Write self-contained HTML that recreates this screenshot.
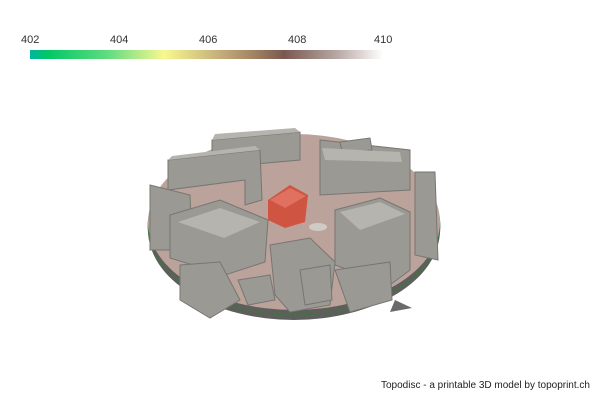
<!DOCTYPE html>
<html><head><meta charset="utf-8"><style>
body{margin:0;width:600px;height:400px;background:#fff;overflow:hidden;position:relative;font-family:"Liberation Sans",sans-serif}
.l{position:absolute;top:34px;font-size:11px;color:#333}
.bar{position:absolute;left:30px;top:50px;width:353px;height:9px;background:linear-gradient(90deg,#00b4a0 0%,#00c864 5%,#60dc80 22%,#f8f890 38%,#c0a878 55%,#a08060 64%,#7a5850 72%,#b8a8a4 87%,#fff 100%)}
.c{position:absolute;right:10px;top:380px;font-size:10px;color:#222}
</style></head><body>
<div class="l" style="left:21px">402</div>
<div class="l" style="left:110px">404</div>
<div class="l" style="left:199px">406</div>
<div class="l" style="left:288px">408</div>
<div class="l" style="left:374px">410</div>
<div class="bar"></div>
<svg width="600" height="400" style="position:absolute;left:0;top:0">
<ellipse cx="294" cy="230" rx="146" ry="90" fill="#5e5e5c"/>
<ellipse cx="294" cy="226" rx="146" ry="89" fill="none" stroke="#3a7a3a" stroke-width="0.8"/>
<ellipse cx="294" cy="222" rx="146" ry="88" fill="#bba29a"/>
<polygon points="390,312 412,308 395,300" fill="#6a6a68"/>
<g fill="#9a9994" stroke="#777672" stroke-width="1">
<polygon points="212,140 300,132 300,160 212,168"/>
<polygon points="168,160 260,150 262,200 245,205 245,180 168,190"/>
<polygon points="150,185 190,195 192,250 150,250"/>
<polygon points="170,215 220,200 268,220 265,262 225,275 170,258"/>
<polygon points="320,140 410,150 410,190 320,195"/>
<polygon points="335,210 380,198 410,212 410,270 390,285 335,265"/>
<polygon points="270,245 310,238 335,262 330,305 290,312 275,295"/>
<polygon points="180,265 220,262 240,300 210,318 180,300"/>
<polygon points="335,270 390,262 392,300 350,312"/>
<polygon points="415,172 435,172 438,260 415,255"/>
<polygon points="238,280 270,275 275,300 248,305"/>
<polygon points="300,270 330,265 332,300 305,305"/>
<polygon points="340,142 370,138 372,150 342,152"/>
</g>
<g fill="#b5b4ae">
<polygon points="212,140 300,132 295,128 215,134"/>
<polygon points="168,160 260,150 255,146 172,156"/>
<polygon points="178,222 220,208 260,222 224,238"/>
<polygon points="322,148 400,152 402,162 325,160"/>
<polygon points="340,212 380,202 405,214 360,230"/>
</g>
<polygon points="268,200 290,185 308,195 305,222 285,228 268,220" fill="#d05442"/>
<polygon points="270,200 290,188 306,196 285,208" fill="#e07060"/>
<ellipse cx="318" cy="227" rx="9" ry="4" fill="#cfcac6"/>
</svg>
<div class="c">Topodisc - a printable 3D model by topoprint.ch</div>
</body></html>
